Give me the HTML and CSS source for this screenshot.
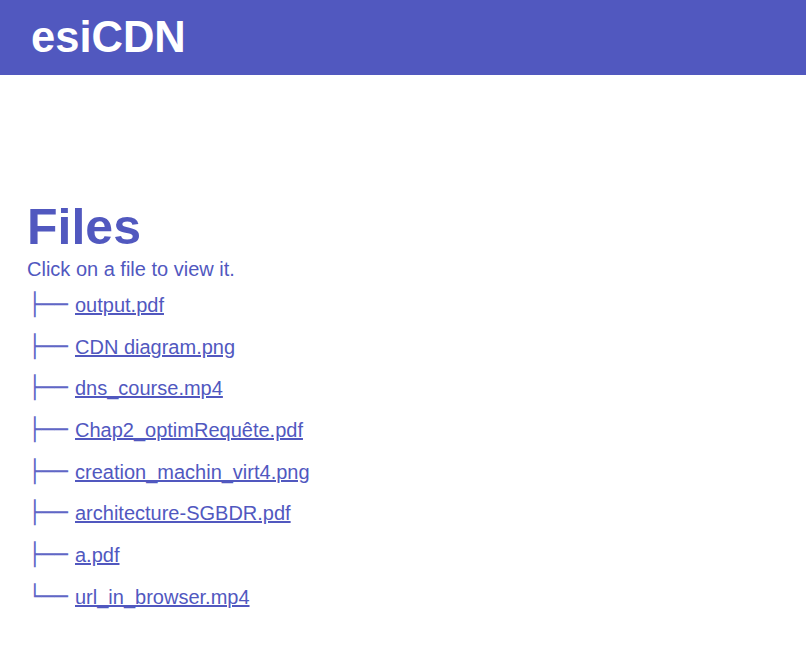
FILE: index.html
```html
<!DOCTYPE html>
<html>
<head>
<meta charset="utf-8">
<link rel="stylesheet" href="styles.css">
</head>
<body>
<header class="topbar"><span class="brand">esiCDN</span></header>
<main class="content">
  <h1 class="title">Files</h1>
  <p class="hint">Click on a file to view it.</p>
  <ul class="tree">
    <li><span class="branch">├──</span><a href="#">output.pdf</a></li>
    <li><span class="branch">├──</span><a href="#">CDN diagram.png</a></li>
    <li><span class="branch">├──</span><a href="#">dns_course.mp4</a></li>
    <li><span class="branch">├──</span><a href="#">Chap2_optimRequête.pdf</a></li>
    <li><span class="branch">├──</span><a href="#">creation_machin_virt4.png</a></li>
    <li><span class="branch">├──</span><a href="#">architecture-SGBDR.pdf</a></li>
    <li><span class="branch">├──</span><a href="#">a.pdf</a></li>
    <li><span class="branch">└──</span><a href="#">url_in_browser.mp4</a></li>
  </ul>
</main>
</body>
</html>
```
FILE: styles.css
```css
html, body {
  margin: 0;
  padding: 0;
  background: #fff;
  font-family: "Liberation Sans", Arial, sans-serif;
  color: #5158bf;
}
.topbar {
  background: #5158bf;
  height: 75px;
  display: flex;
  align-items: center;
  padding-left: 31px;
}
.brand {
  color: #fff;
  font-weight: bold;
  font-size: 43.5px;
}
.content {
  padding: 124px 27px 0;
}
.title {
  margin: 0;
  font-size: 50px;
  line-height: 56px;
  font-weight: bold;
}
.hint {
  margin: 2px 0 0;
  font-size: 20px;
  line-height: 24px;
}
.tree {
  list-style: none;
  margin: 3px 0 0;
  padding: 0 0 0 1px;
}
.tree li {
  font-size: 20px;
  height: 41.7px;
  display: flex;
  align-items: center;
}
.branch {
  font-family: "DejaVu Sans", sans-serif;
  font-size: 22px;
  line-height: 26px;
  width: 47px;
  color: #6066c6;
}
.tree a {
  color: #5158bf;
  text-decoration: underline;
  line-height: 24px;
}
```
